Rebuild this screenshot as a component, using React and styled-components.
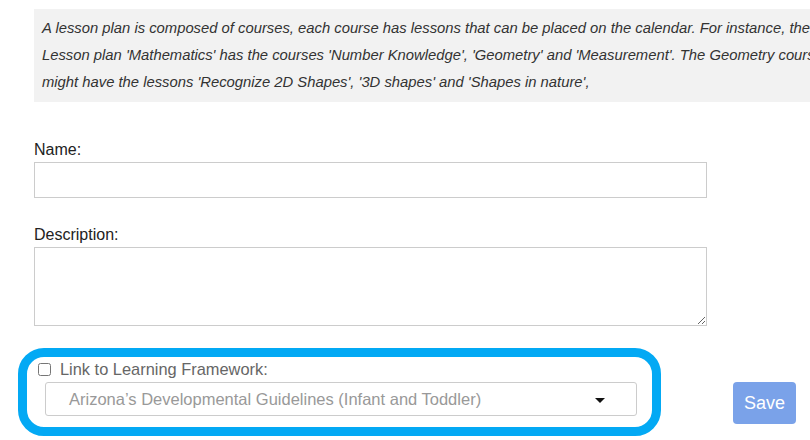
import React from 'react'
import styled, { createGlobalStyle } from 'styled-components'

const GlobalStyle = createGlobalStyle`
  html, body {
    margin: 0;
    overflow: hidden;
    background: #ffffff;
    font-family: "Liberation Sans", Arial, sans-serif;
    color: #222;
  }
`

export default function App() {
  return (
    <>
      <GlobalStyle />
      <Page>
        <Intro>
          A lesson plan is composed of courses, each course has lessons that can
          be placed on the calendar. For instance, the Lesson plan 'Mathematics'
          has the courses 'Number Knowledge', 'Geometry' and 'Measurement'. The
          Geometry course might have the lessons 'Recognize 2D Shapes', '3D
          shapes' and 'Shapes in nature',
        </Intro>

        <Field $top={39}>
          <Label htmlFor="name">Name:</Label>
          <TextInput id="name" type="text" />
        </Field>

        <Field $top={28}>
          <Label htmlFor="description">Description:</Label>
          <TextArea id="description" />
        </Field>

        <Footer>
          <FrameworkGroup>
            <CheckRow>
              <Checkbox type="checkbox" id="link" />
              <CheckLabel htmlFor="link">Link to Learning Framework:</CheckLabel>
            </CheckRow>
            <FakeSelect>
              <span>Arizona’s Developmental Guidelines (Infant and Toddler)</span>
              <Caret />
            </FakeSelect>
          </FrameworkGroup>
          <SaveButton type="button">Save</SaveButton>
        </Footer>
      </Page>
    </>
  )
}

const Page = styled.main`
  width: 900px;
  padding: 9px 0 0 34px;
  box-sizing: border-box;
`
const Intro = styled.p`
  margin: 0;
  width: 814px;
  box-sizing: border-box;
  padding: 6px 8px;
  background: #f2f2f2;
  font-size: 14.8px;
  font-style: italic;
  line-height: 27px;
  color: #333;
`
const Field = styled.div`
  margin-top: ${(p) => p.$top}px;
  width: 673px;
`
const Label = styled.label`
  display: block;
  font-size: 16px;
  line-height: 18px;
  margin-bottom: 3px;
  color: #222;
`
const TextInput = styled.input`
  display: block;
  width: 100%;
  height: 36px;
  box-sizing: border-box;
  border: 1px solid #cccccc;
  border-radius: 0;
  padding: 6px 10px;
  font-size: 16px;
  outline: 0;
`
const TextArea = styled.textarea`
  display: block;
  width: 100%;
  height: 79px;
  box-sizing: border-box;
  border: 1px solid #cccccc;
  border-radius: 0;
  padding: 6px 10px;
  font-size: 16px;
  font-family: inherit;
  outline: 0;
`
const Footer = styled.div`
  margin-top: 22px;
  display: flex;
  align-items: flex-end;
`
const FrameworkGroup = styled.div`
  margin-left: -16px;
  width: 643px;
  box-sizing: border-box;
  border: 9px solid #03a9f4;
  border-radius: 26px;
  padding: 3px 15px 11px 7px;
`
const CheckRow = styled.div`
  display: flex;
  align-items: center;
  height: 18px;
`
const Checkbox = styled.input`
  width: 13px;
  height: 13px;
  margin: 0 9px 0 4px;
`
const CheckLabel = styled.label`
  font-size: 16.4px;
  line-height: 18px;
  color: #666;
`
const FakeSelect = styled.div`
  margin: 4px 0 0 11px;
  width: 592px;
  height: 34px;
  box-sizing: border-box;
  border: 1px solid #cccccc;
  border-radius: 3px;
  background: #ffffff;
  padding: 0 31px 0 23px;
  display: flex;
  align-items: center;
  justify-content: space-between;
  font-size: 16.5px;
  color: #999;
`
const Caret = styled.span`
  width: 0;
  height: 0;
  border-left: 5px solid transparent;
  border-right: 5px solid transparent;
  border-top: 5px solid #111;
  margin-top: 2px;
`
const SaveButton = styled.button`
  margin: 0 0 12px 72px;
  width: 63px;
  height: 42px;
  border: 0;
  border-radius: 4px;
  background: #7aa2e9;
  color: #ffffff;
  font-family: inherit;
  font-size: 18px;
  padding: 0;
  cursor: pointer;
`
